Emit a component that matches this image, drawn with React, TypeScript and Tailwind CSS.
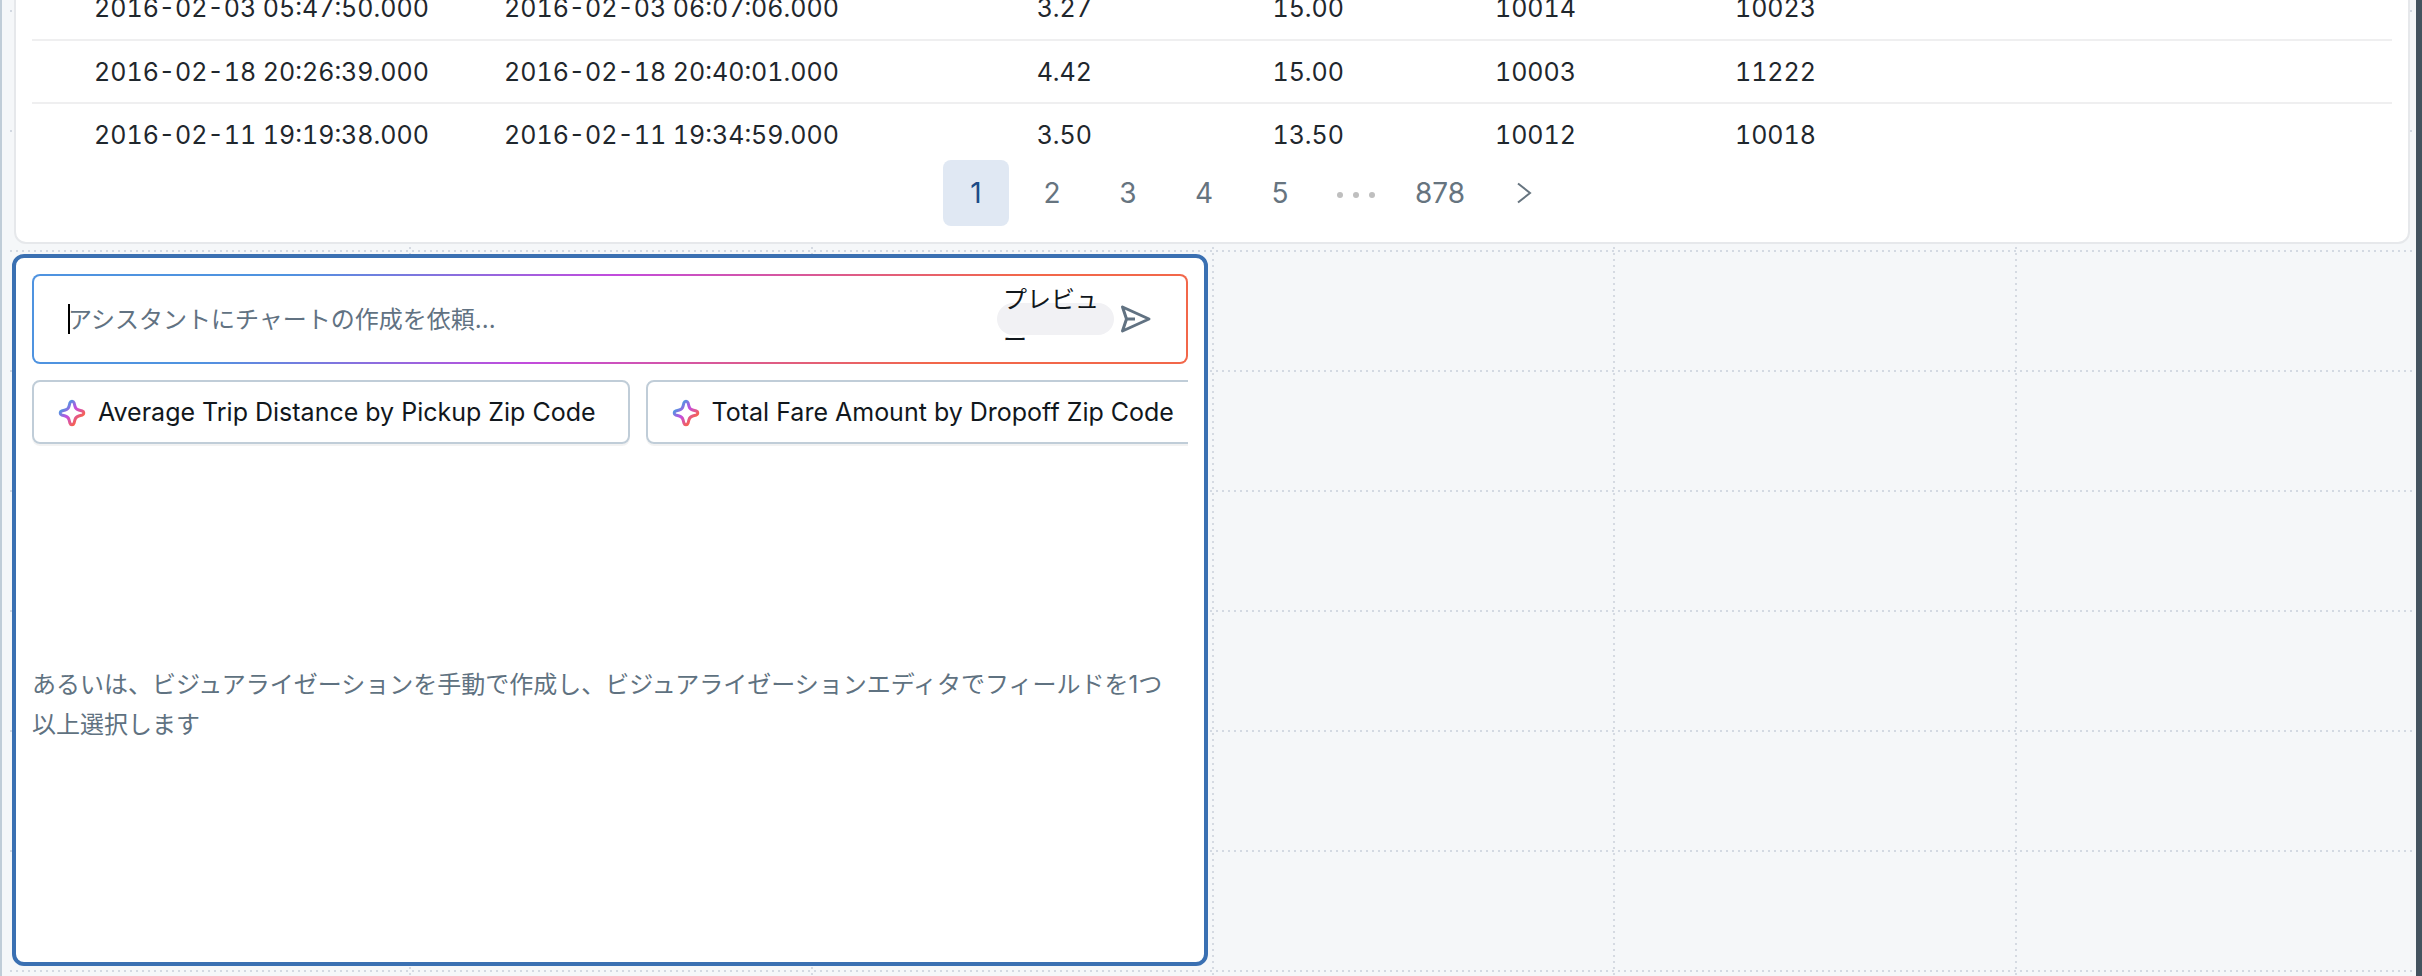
import { useEffect, useRef } from "react";

const trips = [
  ["2016-02-03 05:47:50.000", "2016-02-03 06:07:06.000", "3.27", "15.00", "10014", "10023"],
  ["2016-02-18 20:26:39.000", "2016-02-18 20:40:01.000", "4.42", "15.00", "10003", "11222"],
  ["2016-02-11 19:19:38.000", "2016-02-11 19:34:59.000", "3.50", "13.50", "10012", "10018"],
];

const suggestions = [
  "Average Trip Distance by Pickup Zip Code",
  "Total Fare Amount by Dropoff Zip Code",
];

function CanvasGrid() {
  return (
    <div aria-hidden="true" className="absolute inset-y-0 right-0 left-1.5">
      <div className="grid h-full grid-cols-6">
        {[0, 1, 2, 3, 4, 5].map((column) => (
          <div
            key={column}
            className="bg-[repeating-linear-gradient(180deg,transparent_0_1px,#d5dae2_1px_3px,transparent_3px_6px)] bg-[length:2px_100%] bg-no-repeat first:bg-none"
          />
        ))}
      </div>
      <div className="absolute inset-x-0.5 inset-y-0 bg-[repeating-linear-gradient(90deg,#d3d9e2_0_2px,transparent_2px_6px)] [mask-image:repeating-linear-gradient(180deg,transparent_0_10px,black_10px_12px,transparent_12px_120px)]" />
    </div>
  );
}

function TripTable() {
  return (
    <table className="w-full table-fixed text-[25px] leading-[30px] text-[#1f272d] tabular-nums">
      <colgroup>
        <col className="w-[458px]" />
        <col className="w-[410px]" />
        <col className="w-[208px]" />
        <col className="w-[252px]" />
        <col className="w-[232px]" />
        <col className="w-[240px]" />
        <col />
      </colgroup>
      <tbody>
        {trips.map((trip) => (
          <tr key={trip[0]} className="h-[63px] border-b-2 border-[#efeff0] last:border-b-0">
            {trip.map((value, i) => (
              <td
                key={i}
                className={
                  i === 0
                    ? "pl-[62px] whitespace-nowrap"
                    : i === 1
                      ? "pl-3.5 whitespace-nowrap"
                      : "pr-4 text-right"
                }
              >
                {value}
              </td>
            ))}
            <td />
          </tr>
        ))}
      </tbody>
    </table>
  );
}

function Chevron({ className }: { className?: string }) {
  return (
    <svg viewBox="0 0 24 24" className={className} fill="none" stroke="currentColor" strokeWidth="2">
      <path d="M6 2.500 18 12 6 21.500" />
    </svg>
  );
}

function Pagination() {
  const page =
    "flex h-[66px] min-w-[66px] items-center justify-center rounded-lg px-4 text-[28px] text-[#66747f]";
  return (
    <nav aria-label="Pagination" className="-mt-1.5 flex justify-center gap-2.5">
      <button type="button" aria-label="Previous page" className={page + " invisible"}>
        <Chevron className="size-6 rotate-180" />
      </button>
      <button
        type="button"
        aria-current="page"
        className="flex h-[66px] w-[66px] items-center justify-center rounded-lg bg-[#e0e8f3] text-[28px] text-[#1d4b87]"
      >
        1
      </button>
      {["2", "3", "4", "5"].map((n) => (
        <button key={n} type="button" className={page}>
          {n}
        </button>
      ))}
      <span className="flex w-[66px] items-center justify-center gap-2.5 pt-1">
        <i className="size-1.5 rounded-full bg-[#bfbfbf]" />
        <i className="size-1.5 rounded-full bg-[#bfbfbf]" />
        <i className="size-1.5 rounded-full bg-[#bfbfbf]" />
      </span>
      <button type="button" className={page}>
        878
      </button>
      <button type="button" aria-label="Next page" className={page}>
        <Chevron className="size-6" />
      </button>
    </nav>
  );
}

function Sparkle({ id }: { id: string }) {
  return (
    <svg viewBox="0 0 28 28" className="size-7 shrink-0" fill="none" aria-hidden="true">
      <defs>
        <linearGradient id={id} x1="2" y1="2" x2="26" y2="26" gradientUnits="userSpaceOnUse">
          <stop offset="0.2" stopColor="#4f95e2" />
          <stop offset="0.47" stopColor="#c44ddf" />
          <stop offset="0.8" stopColor="#f9624a" />
        </linearGradient>
      </defs>
      <path
        d="M14 2.200C15 2.200 15.700 2.800 16 3.700L17 7.300C17.500 9.200 18.800 10.500 20.700 11L24.300 12C25.200 12.300 25.800 13 25.800 14S25.200 15.700 24.300 16L20.700 17C18.800 17.500 17.500 18.800 17 20.700L16 24.300C15.700 25.200 15 25.800 14 25.800S12.300 25.200 12 24.300L11 20.700C10.500 18.800 9.200 17.500 7.300 17L3.700 16C2.800 15.700 2.200 15 2.200 14S2.800 12.300 3.700 12L7.300 11C9.200 10.500 10.500 9.200 11 7.300L12 3.700C12.300 2.800 13 2.200 14 2.200Z"
        stroke={`url(#${id})`}
        strokeWidth="3"
        strokeLinejoin="round"
      />
    </svg>
  );
}

function SendIcon() {
  return (
    <svg viewBox="0 0 32 32" className="size-8" fill="none" stroke="currentColor" strokeWidth="3" aria-hidden="true">
      <path d="M2.500 4 29 16 2.500 28 6.500 16Z" strokeLinejoin="round" />
      <path d="M6.500 16H15" />
    </svg>
  );
}

function AssistantPrompt() {
  const input = useRef<HTMLInputElement>(null);
  useEffect(() => input.current?.focus(), []);
  return (
    <div className="rounded-lg bg-[linear-gradient(135deg,#4f93e0_20.5%,#c24bdd_46.91%,#f2674a_79.5%)] p-0.5">
      <div className="flex h-[86px] items-center rounded-md bg-white px-[34px]">
        <span aria-hidden="true" className="-mr-0.5 h-[30px] w-0.5 bg-black" />
        <input
          ref={input}
          type="text"
          aria-label="アシスタントにチャートの作成を依頼"
          placeholder="アシスタントにチャートの作成を依頼..."
          className="h-10 min-w-0 flex-1 text-2xl caret-transparent outline-none placeholder:text-[#617282]"
        />
        <div className="flex h-8 w-[117px] items-center rounded-full bg-[#f1f1f4] px-1.5 pt-0.5 text-2xl leading-10 break-all text-[#11171c]">
          プレビュー
        </div>
        <button type="button" aria-label="送信" className="ml-1.5 text-[#617282]">
          <SendIcon />
        </button>
      </div>
    </div>
  );
}

export default function App() {
  return (
    <div className="flex h-screen overflow-hidden border-r-6 border-l-2 border-r-[#44535f] border-l-[#c0cdd8] bg-[#f5f7f9] font-['Inter','Noto_Sans_CJK_JP',sans-serif]">
      <main className="relative min-w-0 flex-1">
        <CanvasGrid />
        <section className="relative -mt-[25px] mr-1.5 ml-3 rounded-xl border-2 border-[#e6e8eb] bg-white px-4 pb-4">
          <TripTable />
          <Pagination />
        </section>
        <section className="relative mt-2.5 ml-2.5 flex h-[712px] w-[1196px] flex-col rounded-xl border-4 border-[#3a70b2] bg-white p-4">
          <AssistantPrompt />
          <div className="mt-4 flex gap-4 overflow-hidden pb-1">
            {suggestions.map((label, i) => (
              <button
                key={label}
                type="button"
                className="flex h-16 shrink-0 items-center gap-3 rounded-lg border-2 border-[#c0cdd8] pt-0.5 pr-8 pl-6 text-[25px] whitespace-nowrap text-[#11171c] shadow-[0_2px_0_#0000000d]"
              >
                <Sparkle id={`sparkle-${i}`} />
                {label}
              </button>
            ))}
          </div>
          <div className="flex flex-1 items-center pt-4 pr-3">
            <p className="text-2xl leading-10 text-[#5f7281]">
              あるいは、ビジュアライゼーションを手動で作成し、ビジュアライゼーションエディタでフィールドを1つ以上選択します
            </p>
          </div>
        </section>
      </main>
    </div>
  );
}
